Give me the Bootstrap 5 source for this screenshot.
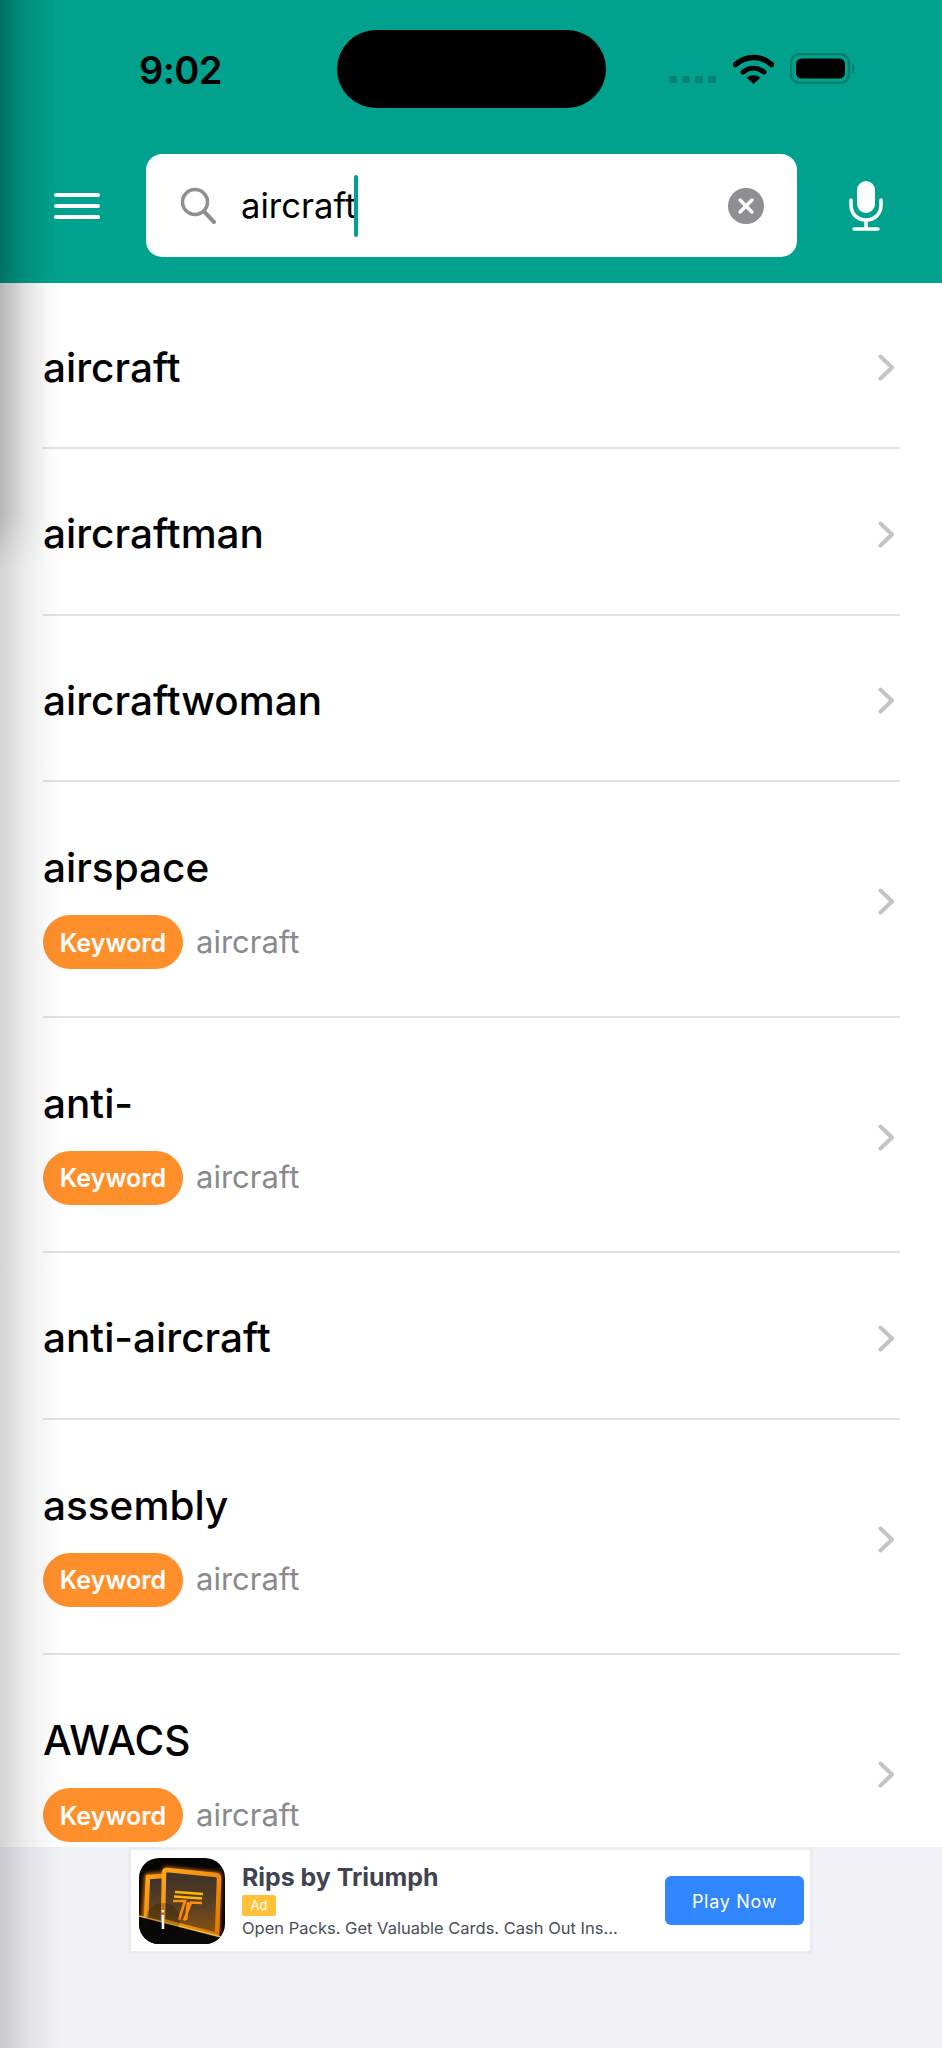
<!DOCTYPE html>
<html lang="en">
<head>
  <meta charset="UTF-8" />
  <meta name="viewport" content="width=device-width, initial-scale=1" />
  <title>Dictionary search</title>
  <link href="https://cdn.jsdelivr.net/npm/bootstrap@5.3.0/dist/css/bootstrap.min.css" rel="stylesheet" />
  <style>
    body {
      height: 2048px;
      overflow: hidden;
      font-family: Inter, "Liberation Sans", sans-serif;
      background: #fff;
      color: #000;
    }
    .screen { height: 2048px; }
    .top-head { height: 283px; background: #00a28d; flex: none; }
    .status-strip { height: 154px; padding: 30px 0 0 139px; flex: none; }
    .clock { width: 198px; font-size: 38px; font-weight: 600; line-height: 80px; letter-spacing: -.6px; }
    .island { width: 269px; height: 78px; border-radius: 39px; background: #000; }
    .signal-dots { margin-left: 63px; margin-top: 46px; gap: 5px; }
    .signal-dots span { width: 8px; height: 7px; border-radius: 2px; background: #058271; }
    .wifi-ico { margin-left: 17px; margin-top: 24px; }
    .batt-ico { margin-left: 16px; margin-top: 23px; }
    .search-row { height: 103px; padding-left: 54px; }
    .menu-lines { width: 46px; gap: 7px; margin-right: 46px; }
    .menu-lines span { height: 4px; border-radius: 2px; background: #fff; }
    .search-box { width: 651px; height: 103px; border-radius: 16px; background: #fff; padding: 0 33px 0 34px; }
    .search-text { font-size: 34.600px; margin-left: 25px; line-height: 1; }
    .caret-bar { width: 4px; height: 62px; border-radius: 2px; background: #00a28d; margin-left: -2px; }
    .mic-ico { margin-left: 52px; }
    .result-list { flex: 1 1 auto; min-height: 0; overflow: hidden; padding: 0 42px 0 43px; }
    .result-row { border-bottom: 2px solid #e3e3e5; padding: 61px 5px 55.500px 0; }
    .result-row:first-child { margin-top: -.5px; }
    .result-row.has-tag { padding: 62px 5px 46.500px 0; }
    .result-row.has-tag svg { margin-bottom: 10px; }
    .word-title { font-size: 40.500px; font-weight: 500; line-height: 48px; }
    .tag-line { margin-top: 23px; gap: 13px; }
    .kw-pill { height: 54px; width: 140px; padding-top: 3px; border-radius: 27px; background: #ff8f2b; color: #fff; font-size: 25px; font-weight: 600; }
    .kw-source { font-size: 31px; color: #8a8a8e; }
    .ad-zone { height: 201px; flex: none; background: #f1f1f6; }
    .ad-box { width: 685px; height: 107px; margin-left: 128px; background: #fff; border: 3px solid #ebebf0; padding: 0 6px 0 8px; }
    .ad-ico { width: 86px; height: 86px; flex: none; }
    .ad-copy { margin-left: 17px; width: 423px; }
    .ad-title { font-size: 24.900px; font-weight: 700; line-height: 30px; color: #3f4450; }
    .ad-tag { width: 34px; height: 21px; margin-top: 3px; border-radius: 2px; background: #ffc13a; color: #fff; font-size: 13px; }
    .ad-sub { font-size: 16.500px; line-height: 22px; margin-top: 1px; color: #4a4e58; white-space: nowrap; }
    .ad-btn { width: 139px; height: 49px; background: #2f86ff; border: 0; border-radius: 6px; color: #fff; font-size: 18px; letter-spacing: .7px; padding: 2px 0 0; }
    /* edge shadow of the page underneath, lies over everything */
    .edge-shade { position: absolute; left: 0; top: 0; width: 66px; height: 2048px; pointer-events: none;
      background: linear-gradient(to right, rgba(0,0,0,.17), rgba(0,0,0,.07) 40%, rgba(0,0,0,.02) 75%, rgba(0,0,0,0)); }
    .edge-shade::before { content: ""; position: absolute; left: 0; top: 0; width: 50px; height: 570px;
      background: linear-gradient(to right, rgba(0,0,0,.14), rgba(0,0,0,.05) 50%, rgba(0,0,0,0));
      -webkit-mask-image: linear-gradient(to bottom, #000 90%, transparent); mask-image: linear-gradient(to bottom, #000 90%, transparent); }
  </style>
</head>
<body>
  <div class="screen d-flex flex-column position-relative">
    <header class="top-head">
      <div class="status-strip d-flex align-items-start">
        <div class="clock">9:02</div>
        <div class="island"></div>
        <div class="signal-dots d-flex"><span></span><span></span><span></span><span></span></div>
        <svg class="wifi-ico" width="41" height="30" viewBox="0 0 41 30">
          <path d="M2.500 10.500C13 1 28 1 38.500 10.500" fill="none" stroke="#000" stroke-width="5.500" stroke-linecap="round"/>
          <path d="M10 18c6.500-5 14.500-5 21 0" fill="none" stroke="#000" stroke-width="5" stroke-linecap="round"/>
          <path d="M13.500 23.500c4.500-3 9.500-3 14 0L20.500 30z" fill="#000"/>
        </svg>
        <svg class="batt-ico" width="66" height="31" viewBox="0 0 66 31">
          <rect x="1" y="1" width="58" height="29" rx="9" fill="none" stroke="#047d6d" stroke-width="2.500"/>
          <rect x="6" y="5.500" width="49" height="20" rx="5.500" fill="#000"/>
          <path d="M62 10c3 1 3.500 9 0 11z" fill="#047d6d"/>
        </svg>
      </div>
      <div class="search-row d-flex align-items-center">
        <div class="menu-lines d-flex flex-column"><span></span><span></span><span></span></div>
        <div class="search-box d-flex align-items-center">
          <svg width="36" height="37" viewBox="0 0 36 37" fill="none" stroke="#8e8e93" stroke-width="3.500" stroke-linecap="round">
            <circle cx="15" cy="15" r="12.500"/>
            <path d="M24.500 25L34 35" stroke-width="4"/>
          </svg>
          <span class="search-text">aircraft</span>
          <span class="caret-bar"></span>
          <svg class="ms-auto" width="36" height="36" viewBox="0 0 36 36">
            <circle cx="18" cy="18" r="18" fill="#8e8e93"/>
            <path d="M12 12l12 12M24 12L12 24" stroke="#fff" stroke-width="3.500" stroke-linecap="round"/>
          </svg>
        </div>
        <svg class="mic-ico" width="34" height="50" viewBox="0 0 34 50" fill="none">
          <rect x="8" y="0" width="18" height="32" rx="9" fill="#fff"/>
          <path d="M2 19v5c0 9 6.500 15 15 15s15-6 15-15v-5M17 39v8" stroke="#fff" stroke-width="3.500" stroke-linecap="round"/>
          <path d="M5 48h24" stroke="#fff" stroke-width="3.500" stroke-linecap="round"/>
        </svg>
      </div>
    </header>

    <div class="result-list" id="results"></div>

    <div class="ad-zone">
      <div class="ad-box d-flex align-items-center">
        <svg class="ad-ico" viewBox="0 0 86 86">
          <defs>
            <linearGradient id="cardFill" x1="0" y1="0" x2="0" y2="1">
              <stop offset="0" stop-color="#3b3029"/>
              <stop offset=".55" stop-color="#5a3f22"/>
              <stop offset="1" stop-color="#8a5410"/>
            </linearGradient>
            <linearGradient id="glowEdge" x1="0" y1="0" x2="1" y2="1">
              <stop offset="0" stop-color="#ffa51c"/>
              <stop offset="1" stop-color="#e27800"/>
            </linearGradient>
            <filter id="softGlow" x="-20%" y="-20%" width="140%" height="140%"><feGaussianBlur stdDeviation="2"/></filter>
            <clipPath id="iconClip"><rect width="86" height="86" rx="20"/></clipPath>
          </defs>
          <g clip-path="url(#iconClip)">
            <rect width="86" height="86" fill="#060504"/>
            <path d="M6 16l22-2v56H2z" fill="#e27400" filter="url(#softGlow)"/>
            <path d="M25 9l57 6-2 62-57-14z" fill="#ee8000" filter="url(#softGlow)"/>
            <path d="M9 19l18-1v48L7 62z" fill="url(#cardFill)" stroke="url(#glowEdge)" stroke-width="4.500"/>
            <path d="M28 12l49 5c2 .3 3 2 3 4l-2 56-54-14 1-48c0-2 1-3 3-3z" fill="url(#cardFill)" stroke="url(#glowEdge)" stroke-width="4.500"/>
            <path d="M36 34l28 2M35 38.500l28 2" stroke="#ffb700" stroke-width="2.600"/>
            <path d="M34 43h12l-6 19M63 45l-11-.5-7 18M49 44l-2 18" fill="none" stroke="#ff8c0a" stroke-width="2.600"/>
            <path d="M0 58l86 22v6H0z" fill="#0a0908"/>
            <path d="M0 58l86 22" stroke="#ffd24a" stroke-width="1.500" opacity=".85"/>
            <circle cx="24" cy="62" r="17" fill="#000" opacity=".22"/>
            <text x="24" y="71" text-anchor="middle" font-family="Liberation Sans, sans-serif" font-size="26" fill="#fff">i</text>
          </g>
        </svg>
        <div class="ad-copy">
          <div class="ad-title">Rips by Triumph</div>
          <div class="ad-tag d-flex align-items-center justify-content-center">Ad</div>
          <div class="ad-sub">Open Packs. Get Valuable Cards. Cash Out Ins...</div>
        </div>
        <button class="ad-btn btn ms-auto" type="button">Play Now</button>
      </div>
    </div>

    <div class="edge-shade"></div>
  </div>

  <script>
    const words = [
      ['aircraft', false], ['aircraftman', false], ['aircraftwoman', false],
      ['airspace', true], ['anti-', true], ['anti-aircraft', false],
      ['assembly', true], ['AWACS', true]
    ];

    const chevron = '<svg width="17" height="27" viewBox="0 0 17 27" fill="none"><path d="M2.500 2.500l11.500 11-11.500 11" stroke="#c4c4c6" stroke-width="4" stroke-linecap="round" stroke-linejoin="round"/></svg>';

    const list = document.getElementById('results');
    words.forEach(([word, tagged]) => {
      const row = document.createElement('div');
      row.className = 'result-row d-flex align-items-center justify-content-between' + (tagged ? ' has-tag' : '');
      const tagLine = tagged
        ? '<div class="tag-line d-flex align-items-center"><span class="kw-pill d-flex align-items-center justify-content-center">Keyword</span><span class="kw-source">aircraft</span></div>'
        : '';
      row.innerHTML = `<div><div class="word-title">${word}</div>${tagLine}</div>${chevron}`;
      list.appendChild(row);
    });
  </script>
  <script src="https://cdn.jsdelivr.net/npm/bootstrap@5.3.0/dist/js/bootstrap.bundle.min.js"></script>
</body>
</html>
